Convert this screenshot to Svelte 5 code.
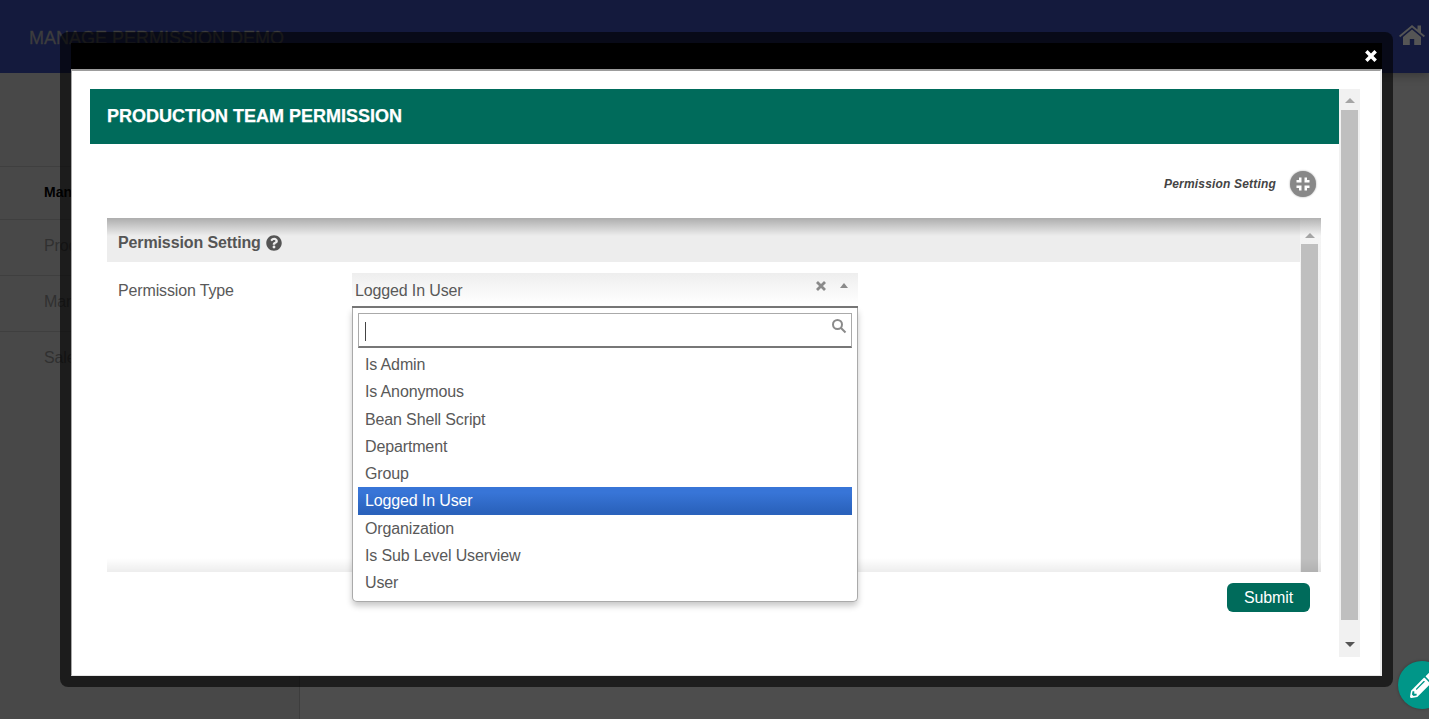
<script>
  const nav = [
    { label: 'Manage', active: true },
    { label: 'Product' },
    { label: 'Market' },
    { label: 'Sales' }
  ];
  const options = ['Is Admin', 'Is Anonymous', 'Bean Shell Script', 'Department', 'Group', 'Logged In User', 'Organization', 'Is Sub Level Userview', 'User'];
  const selected = 'Logged In User';
</script>

<div class="page">
  <header class="topbar">
    <span class="brand">MANAGE PERMISSION DEMO</span>
    <svg class="home" viewBox="0 0 26 20" aria-hidden="true"><path d="M13 0L0 10.700l1.200 1.500L13 2.600l11.800 9.600 1.200-1.500-4-3.300V.6h-3.500v3.800zM13 4.500L4 11.900V20h6.800v-6h4.400v6H22v-8.100z"/></svg>
  </header>
  <div class="body">
    <aside class="side">
      {#each nav as item}
        <div class="navrow" class:active={item.active}>{item.label}</div>
      {/each}
    </aside>
  </div>

  <div class="modal">
    <div class="modal-bar">
      <svg class="close" viewBox="0 0 12 12" aria-hidden="true"><path d="M2 2l8 8M10 2l-8 8"/></svg>
    </div>
    <div class="modal-content">
      <div class="scroller">
        <div class="main">
          <h1 class="title">PRODUCTION TEAM PERMISSION</h1>
          <div class="toolbar">
            <em>Permission Setting</em>
            <span class="round">
              <svg viewBox="0 0 26 26" aria-hidden="true"><path d="M6.500 9h2.500V6.500h2.500v5h-5zM14.500 6.500H17V9h2.500v2.500h-5zM6.500 14.500h5v5H9V17H6.500zM14.500 14.500h5V17H17v2.500h-2.500z"/></svg>
            </span>
          </div>

          <section class="panel">
            <div class="panel-main">
              <div class="panel-head">
                <span>Permission Setting</span>
                <svg class="help" viewBox="0 0 512 512" aria-hidden="true"><path d="M504 256c0 136.997-111.043 248-248 248S8 392.997 8 256C8 119.083 119.043 8 256 8s248 111.083 248 248zM262.655 90c-54.497 0-89.255 22.957-116.549 63.758-3.536 5.286-2.353 12.415 2.715 16.258l34.699 26.31c5.205 3.947 12.621 3.008 16.665-2.122 17.864-22.658 30.113-35.797 57.303-35.797 20.429 0 45.698 13.148 45.698 32.958 0 14.976-12.363 22.667-32.534 33.976C247.128 238.528 216 254.941 216 296v4c0 6.627 5.373 12 12 12h56c6.627 0 12-5.373 12-12v-1.333c0-28.462 83.186-29.647 83.186-106.667 0-58.002-60.165-102-116.531-102zM256 338c-25.365 0-46 20.635-46 46 0 25.364 20.635 46 46 46s46-20.636 46-46c0-25.365-20.635-46-46-46z"/></svg>
              </div>
              <div class="field">
                <span class="field-label">Permission Type</span>
                <div class="select">
                  <div class="select-value">
                    <span>{selected}</span>
                    <svg class="clear" viewBox="0 0 12 12" aria-hidden="true"><path d="M2 2l8 8M10 2l-8 8"/></svg>
                    <i class="tri up small"></i>
                  </div>
                  <div class="drop">
                    <div class="search">
                      <span class="caret"></span>
                      <svg class="lens" viewBox="0 0 16 16" aria-hidden="true"><circle cx="6.500" cy="6.500" r="4.500"/><path d="M10 10l4.500 4.500"/></svg>
                    </div>
                    <ul>
                      {#each options as o}
                        <li class:hl={o === selected}>{o}</li>
                      {/each}
                    </ul>
                  </div>
                </div>
              </div>
            </div>
            <div class="bar bar-inner">
              <i class="tri up"></i>
              <div class="thumb"></div>
            </div>
            <div class="shade-top"></div>
            <div class="shade-bottom"></div>
          </section>

          <div class="foot"><button type="button">Submit</button></div>
        </div>
        <div class="bar bar-outer">
          <i class="tri up"></i>
          <div class="thumb"></div>
          <i class="tri down"></i>
        </div>
      </div>
    </div>
  </div>

  <button type="button" class="fab" aria-label="Edit">
    <svg viewBox="0 0 512 512" aria-hidden="true"><path d="M497.900 142.100l-46.100 46.100c-4.700 4.700-12.300 4.700-17 0l-111-111c-4.700-4.700-4.700-12.300 0-17l46.100-46.100c18.700-18.700 49.100-18.700 67.900 0l60.100 60.100c18.800 18.700 18.800 49.100 0 67.900zM284.200 99.800L21.600 362.400.4 483.900c-2.900 16.400 11.400 30.600 27.800 27.800l121.500-21.300 262.600-262.600c4.700-4.700 4.700-12.300 0-17l-111-111c-4.800-4.700-12.400-4.700-17.100 0zM124.100 339.900c-5.500-5.500-5.500-14.300 0-19.800l154-154c5.500-5.500 14.300-5.500 19.800 0s5.500 14.300 0 19.800l-154 154c-5.500 5.500-14.300 5.500-19.800 0zM88 424h48v36.300l-64.500 11.300-31.100-31.100L51.700 376H88v48z"/></svg>
  </button>
</div>

<style>
  :global(body) { margin: 0; }
  .page {
    position: relative; width: 1429px; height: 719px; overflow: hidden;
    background: #4d4d4d; font-family: "Liberation Sans", Arial, sans-serif; color: #555;
    display: flex; flex-direction: column;
  }
  .topbar {
    height: 73px; flex: none; background: #141a3d; display: flex; align-items: center;
    justify-content: space-between; padding: 0 4px 0 29px; box-sizing: border-box;
    box-shadow: 0 2px 10px rgba(0,0,0,.3);
  }
  .brand { font-size: 18px; color: #3d3d3d; font-weight: 400; -webkit-text-stroke: .3px #3d3d3d; position: relative; top: 1.500px; }
  .home { width: 26px; height: 20px; fill: #555; margin-bottom: 3px; }
  .body { flex: 1; display: flex; }
  .side { width: 299px; background: #484848; border-right: 1px solid #3d3d3d; padding-top: 93px; }
  .navrow {
    height: 56px; line-height: 51px; padding-left: 44px; font-size: 16px; letter-spacing: -.14px; color: #303030;
    border-top: 1px solid #3f3f3f; box-sizing: border-box; white-space: nowrap;
  }
  .navrow.active { height: 53px; font-size: 14px; font-weight: 700; color: #000; letter-spacing: 0; }

  .modal {
    position: absolute; left: 60px; top: 32px; width: 1333px; height: 655px; box-sizing: border-box;
    padding: 11px; border-radius: 8px; background: rgba(0,0,0,.6); display: flex; flex-direction: column;
  }
  .modal-bar { height: 26px; flex: none; background: #000; display: flex; justify-content: flex-end; align-items: center; padding-right: 4px; }
  .close { width: 14px; height: 14px; fill: none; stroke: #fff; stroke-width: 3; }
  .modal-content {
    flex: 1; min-height: 0; background: #fff; box-sizing: border-box;
    border-top: 2px solid #9c9c9c; border-left: 1px solid #a8a8a8; border-right: 2px solid #eee; border-bottom: 1px solid #e6e6e6;
    padding: 18px 19px 18px 18px;
  }
  .scroller { display: flex; height: 568px; }
  .main { width: 1249px; flex: none; display: flex; flex-direction: column; }
  .title {
    margin: 0; height: 55px; line-height: 54px; background: #006b5b; color: #fff; font-size: 18px; font-weight: 700;
    padding-left: 17px; flex: none; -webkit-text-stroke: .25px #fff;
  }
  .toolbar { height: 74px; flex: none; display: flex; align-items: flex-start; justify-content: flex-end; gap: 14px; padding: 27px 23px 0 0; box-sizing: border-box; }
  .toolbar em { font-size: 12px; font-weight: 700; color: #444; line-height: 26px; letter-spacing: .18px; }
  .round { width: 26px; height: 26px; border-radius: 50%; background: #888; display: block; box-shadow: 0 0 2px #999; }
  .round svg { display: block; width: 26px; height: 26px; fill: #fff; }

  .panel { position: relative; height: 354px; margin: 0 18px 0 17px; display: flex; flex: none; }
  .panel-main { flex: 1; min-width: 0; }
  .panel-head {
    height: 44px; background: #ededed; display: flex; align-items: center; gap: 5px; padding: 5px 0 0 11px; box-sizing: border-box;
    font-size: 16px; font-weight: 700; letter-spacing: -.12px; color: #555;
  }
  .help { width: 16px; height: 16px; fill: #555; }
  .field { display: flex; padding: 11px 0 0 11px; }
  .field-label { width: 234px; font-size: 16px; letter-spacing: -.14px; line-height: 35px; color: #595959; flex: none; }
  .select { position: relative; width: 506px; }
  .select-value {
    height: 35px; box-sizing: border-box; border-bottom: 2px solid #777;
    background: linear-gradient(#eee, #fff 95%); display: flex; align-items: center; padding: 2px 9px 0 3px;
    font-size: 16px; letter-spacing: -.14px; color: #595959;
  }
  .select-value span { flex: 1; }
  .clear { width: 12px; height: 12px; fill: none; stroke: #8a8a8a; stroke-width: 2.800; margin-right: 12px; position: relative; top: -5px; left: -1px; }
  .tri { display: block; width: 0; height: 0; border-left: 5px solid transparent; border-right: 5px solid transparent; }
  .tri.up { border-bottom: 5px solid #a5a5a5; }
  .tri.down { border-top: 5px solid #555; }
  .tri.small { position: relative; top: -5px; border-left-width: 4px; border-right-width: 4px; border-bottom-color: #8a8a8a; margin-right: 1px; }
  .drop {
    position: absolute; left: 0; top: 35px; width: 506px; height: 294px; box-sizing: border-box; z-index: 3; background: #fff;
    border: 1px solid #aaa; border-top: 0; border-radius: 0 0 5px 5px; box-shadow: 0 4px 6px rgba(0,0,0,.22); padding: 5px 5px 0;
  }
  .search {
    height: 35px; box-sizing: border-box; border: 1px solid #aaa; border-bottom: 2px solid #777; display: flex;
    align-items: center; justify-content: space-between; padding: 0 4px 0 6px;
  }
  .caret { display: block; width: 1px; height: 19px; background: #444; margin-top: 2px; }
  .lens { width: 16px; height: 16px; fill: none; stroke: #8a8a8a; stroke-width: 2; margin-top: -8px; }
  ul { list-style: none; margin: 3px 0 0; padding: 0; }
  li { height: 27.25px; line-height: 27.25px; padding-left: 7px; font-size: 16px; letter-spacing: -.14px; color: #595959; }
  li.hl { background: linear-gradient(#3875d7 20%, #2a62bc 90%); color: #fff; }

  .bar { flex: none; background: #f1f1f1; display: flex; flex-direction: column; align-items: center; box-sizing: border-box; }
  .bar-inner { width: 21px; padding-top: 15px; margin-left: -1px; background: linear-gradient(#f4f4f4, #f1f1f1); }
  .bar-inner .thumb { width: 17px; flex: 1; background: #bfbfbf; margin-top: 6px; position: relative; left: -1px; }
  .bar-inner .tri { position: relative; left: -1px; }
  .bar-outer { width: 21px; padding-top: 9px; padding-bottom: 10px; }
  .bar-outer .thumb { width: 17px; height: 510px; background: #bfbfbf; margin: 7px 0 22px; }
  .shade-top { position: absolute; left: 0; right: 0; top: 0; height: 18px; background: linear-gradient(rgba(0,0,0,.27), rgba(0,0,0,0)); pointer-events: none; }
  .shade-bottom { position: absolute; left: 0; right: 0; bottom: 0; height: 14px; background: linear-gradient(rgba(0,0,0,0), rgba(0,0,0,.07)); pointer-events: none; }

  .foot { display: flex; justify-content: flex-end; padding: 11px 29px 0 0; }
  .foot button {
    width: 83px; height: 29px; border: 0; border-radius: 6px; background: #006b5b; color: #fff;
    font: 16px "Liberation Sans", Arial, sans-serif; letter-spacing: -.1px; padding: 0;
  }
  .fab {
    position: absolute; left: 1398px; top: 661px; width: 48px; height: 48px; border-radius: 50%; border: 0; padding: 0;
    background: #009688; box-shadow: 0 0 3px rgba(0,0,0,.3); display: flex; align-items: center; justify-content: center;
  }
  .fab svg { width: 25px; height: 25px; fill: #fff; }
</style>
